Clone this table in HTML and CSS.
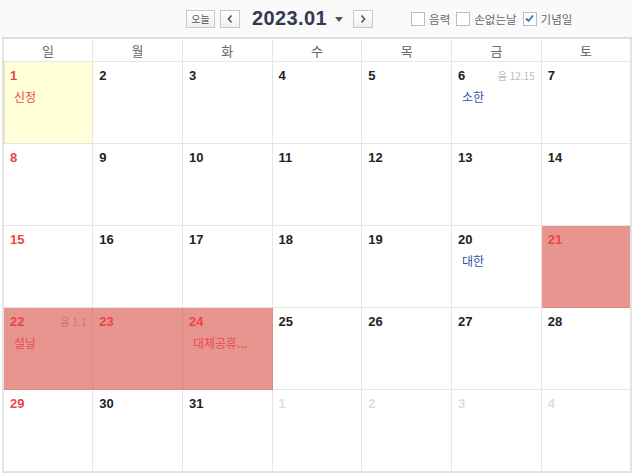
FILE: index.html
```html
<!DOCTYPE html>
<html lang="ko">
<head>
  <meta charset="UTF-8" />
  <title>달력 2023.01</title>
  <link rel="stylesheet" href="styles.css">
</head>
<body>
  <div class="toolbar">
    <div class="nav">
      <button class="btn today">오늘</button>
      <button class="btn arrow">
        <svg width="8" height="10" viewBox="0 0 8 10"><path d="M5.5 1.5 L2.5 5 L5.5 8.5" fill="none" stroke="#555" stroke-width="1.6"/></svg>
      </button>
      <span class="month">2023.01</span>
      <span class="caret"></span>
      <button class="btn arrow">
        <svg width="8" height="10" viewBox="0 0 8 10"><path d="M2.5 1.5 L5.5 5 L2.5 8.5" fill="none" stroke="#555" stroke-width="1.6"/></svg>
      </button>
    </div>
    <div class="options">
      <label class="opt"><span class="box"></span>음력</label>
      <label class="opt"><span class="box"></span>손없는날</label>
      <label class="opt"><span class="box">
        <svg width="11" height="11" viewBox="0 0 11 11"><path d="M2 5.5 L4.5 8 L9 2.5" fill="none" stroke="#3b6fb6" stroke-width="1.8"/></svg>
      </span>기념일</label>
    </div>
  </div>

  <table class="calendar">
    <thead>
      <tr><th>일</th><th>월</th><th>화</th><th>수</th><th>목</th><th>금</th><th>토</th></tr>
    </thead>
    <tbody>
      <tr>
        <td class="today-cell"><span class="num sun">1</span><div class="event red">신정</div></td>
        <td><span class="num">2</span></td>
        <td><span class="num">3</span></td>
        <td><span class="num">4</span></td>
        <td><span class="num">5</span></td>
        <td><span class="num">6</span><span class="lunar">음 12.15</span><div class="event blue">소한</div></td>
        <td><span class="num">7</span></td>
      </tr>
      <tr>
        <td><span class="num sun">8</span></td>
        <td><span class="num">9</span></td>
        <td><span class="num">10</span></td>
        <td><span class="num">11</span></td>
        <td><span class="num">12</span></td>
        <td><span class="num">13</span></td>
        <td><span class="num">14</span></td>
      </tr>
      <tr>
        <td><span class="num sun">15</span></td>
        <td><span class="num">16</span></td>
        <td><span class="num">17</span></td>
        <td><span class="num">18</span></td>
        <td><span class="num">19</span></td>
        <td><span class="num">20</span><div class="event blue">대한</div></td>
        <td class="holiday"><span class="num sun">21</span></td>
      </tr>
      <tr>
        <td class="holiday"><span class="num sun">22</span><span class="lunar dark">음 1.1</span><div class="event red">설날</div></td>
        <td class="holiday"><span class="num sun">23</span></td>
        <td class="holiday"><span class="num sun">24</span><div class="event red">대체공휴...</div></td>
        <td><span class="num">25</span></td>
        <td><span class="num">26</span></td>
        <td><span class="num">27</span></td>
        <td><span class="num">28</span></td>
      </tr>
      <tr>
        <td><span class="num sun">29</span></td>
        <td><span class="num">30</span></td>
        <td><span class="num">31</span></td>
        <td><span class="num other">1</span></td>
        <td><span class="num other">2</span></td>
        <td><span class="num other">3</span></td>
        <td><span class="num other">4</span></td>
      </tr>
    </tbody>
  </table>
</body>
</html>
```

FILE: styles.css
```css
body {
  margin: 0;
  font-family: "Liberation Sans", "Noto Sans CJK KR", sans-serif;
  background: #ffffff;
  color: #222;
}

.toolbar {
  height: 37px;
  background-color: #fafafa;
  display: flex;
  align-items: center;
  position: relative;
}

.nav {
  display: flex;
  align-items: center;
  margin-left: 186px;
}

.btn {
  height: 18px;
  border: 1px solid #c8c8c8;
  background: linear-gradient(#ffffff, #f0f0f0);
  padding: 0;
  display: flex;
  align-items: center;
  justify-content: center;
  font-family: "Noto Sans CJK KR", sans-serif;
  font-size: 10px;
  color: #555;
}

.today {
  width: 29px;
  margin-right: 5px;
}

.arrow {
  width: 20px;
}

.month {
  font-size: 20px;
  font-weight: bold;
  color: #333a4f;
  margin-left: 12px;
  letter-spacing: 0.4px;
}

.caret {
  width: 0;
  height: 0;
  border-left: 4px solid transparent;
  border-right: 4px solid transparent;
  border-top: 5px solid #555;
  margin: 2px 10px 0 8px;
}

.options {
  display: flex;
  align-items: center;
  margin-left: 38px;
}

.opt {
  display: flex;
  align-items: center;
  font-family: "Noto Sans CJK KR", sans-serif;
  font-size: 11.5px;
  color: #666;
  margin-right: 6px;
}

.box {
  width: 12px;
  height: 12px;
  border: 1px solid #bdbdbd;
  background: #fff;
  margin-right: 4px;
  display: flex;
  align-items: center;
  justify-content: center;
}

.calendar {
  margin-left: 2px;
  width: 630px;
  border-collapse: collapse;
  table-layout: fixed;
  border: 2px solid #e3e3e3;
}

.calendar th {
  height: 22px;
  border: 1px solid #e6e6e6;
  border-top: 2px solid #dedede;
  font-family: "Noto Sans CJK KR", sans-serif;
  font-weight: normal;
  font-size: 13px;
  color: #666;
  padding: 0;
}

.calendar td {
  height: 77px;
  border: 1px solid #e6e6e6;
  vertical-align: top;
  padding: 4px 6px 0 6px;
  position: relative;
}

.num {
  font-size: 13px;
  font-weight: bold;
  color: #222;
}

.num.sun {
  color: #f04444;
}

.num.other {
  color: #dddddd;
}

.lunar {
  position: absolute;
  right: 6px;
  top: 6px;
  font-family: "Noto Sans CJK KR", sans-serif;
  font-size: 10px;
  color: #bbbbbb;
}

.lunar.dark {
  color: #c97672;
}

.event {
  font-family: "Noto Sans CJK KR", sans-serif;
  font-size: 12px;
  margin: 4px 0 0 4px;
}

.event.red {
  color: #f04a4a;
}

.event.blue {
  color: #2b54a8;
}

.today-cell {
  background-color: #ffffd8;
  box-shadow: inset 1px 0 0 #e6e6b8;
}

.calendar td.holiday {
  background-color: #e7958f;
  border-color: #dd8a85;
}
```
